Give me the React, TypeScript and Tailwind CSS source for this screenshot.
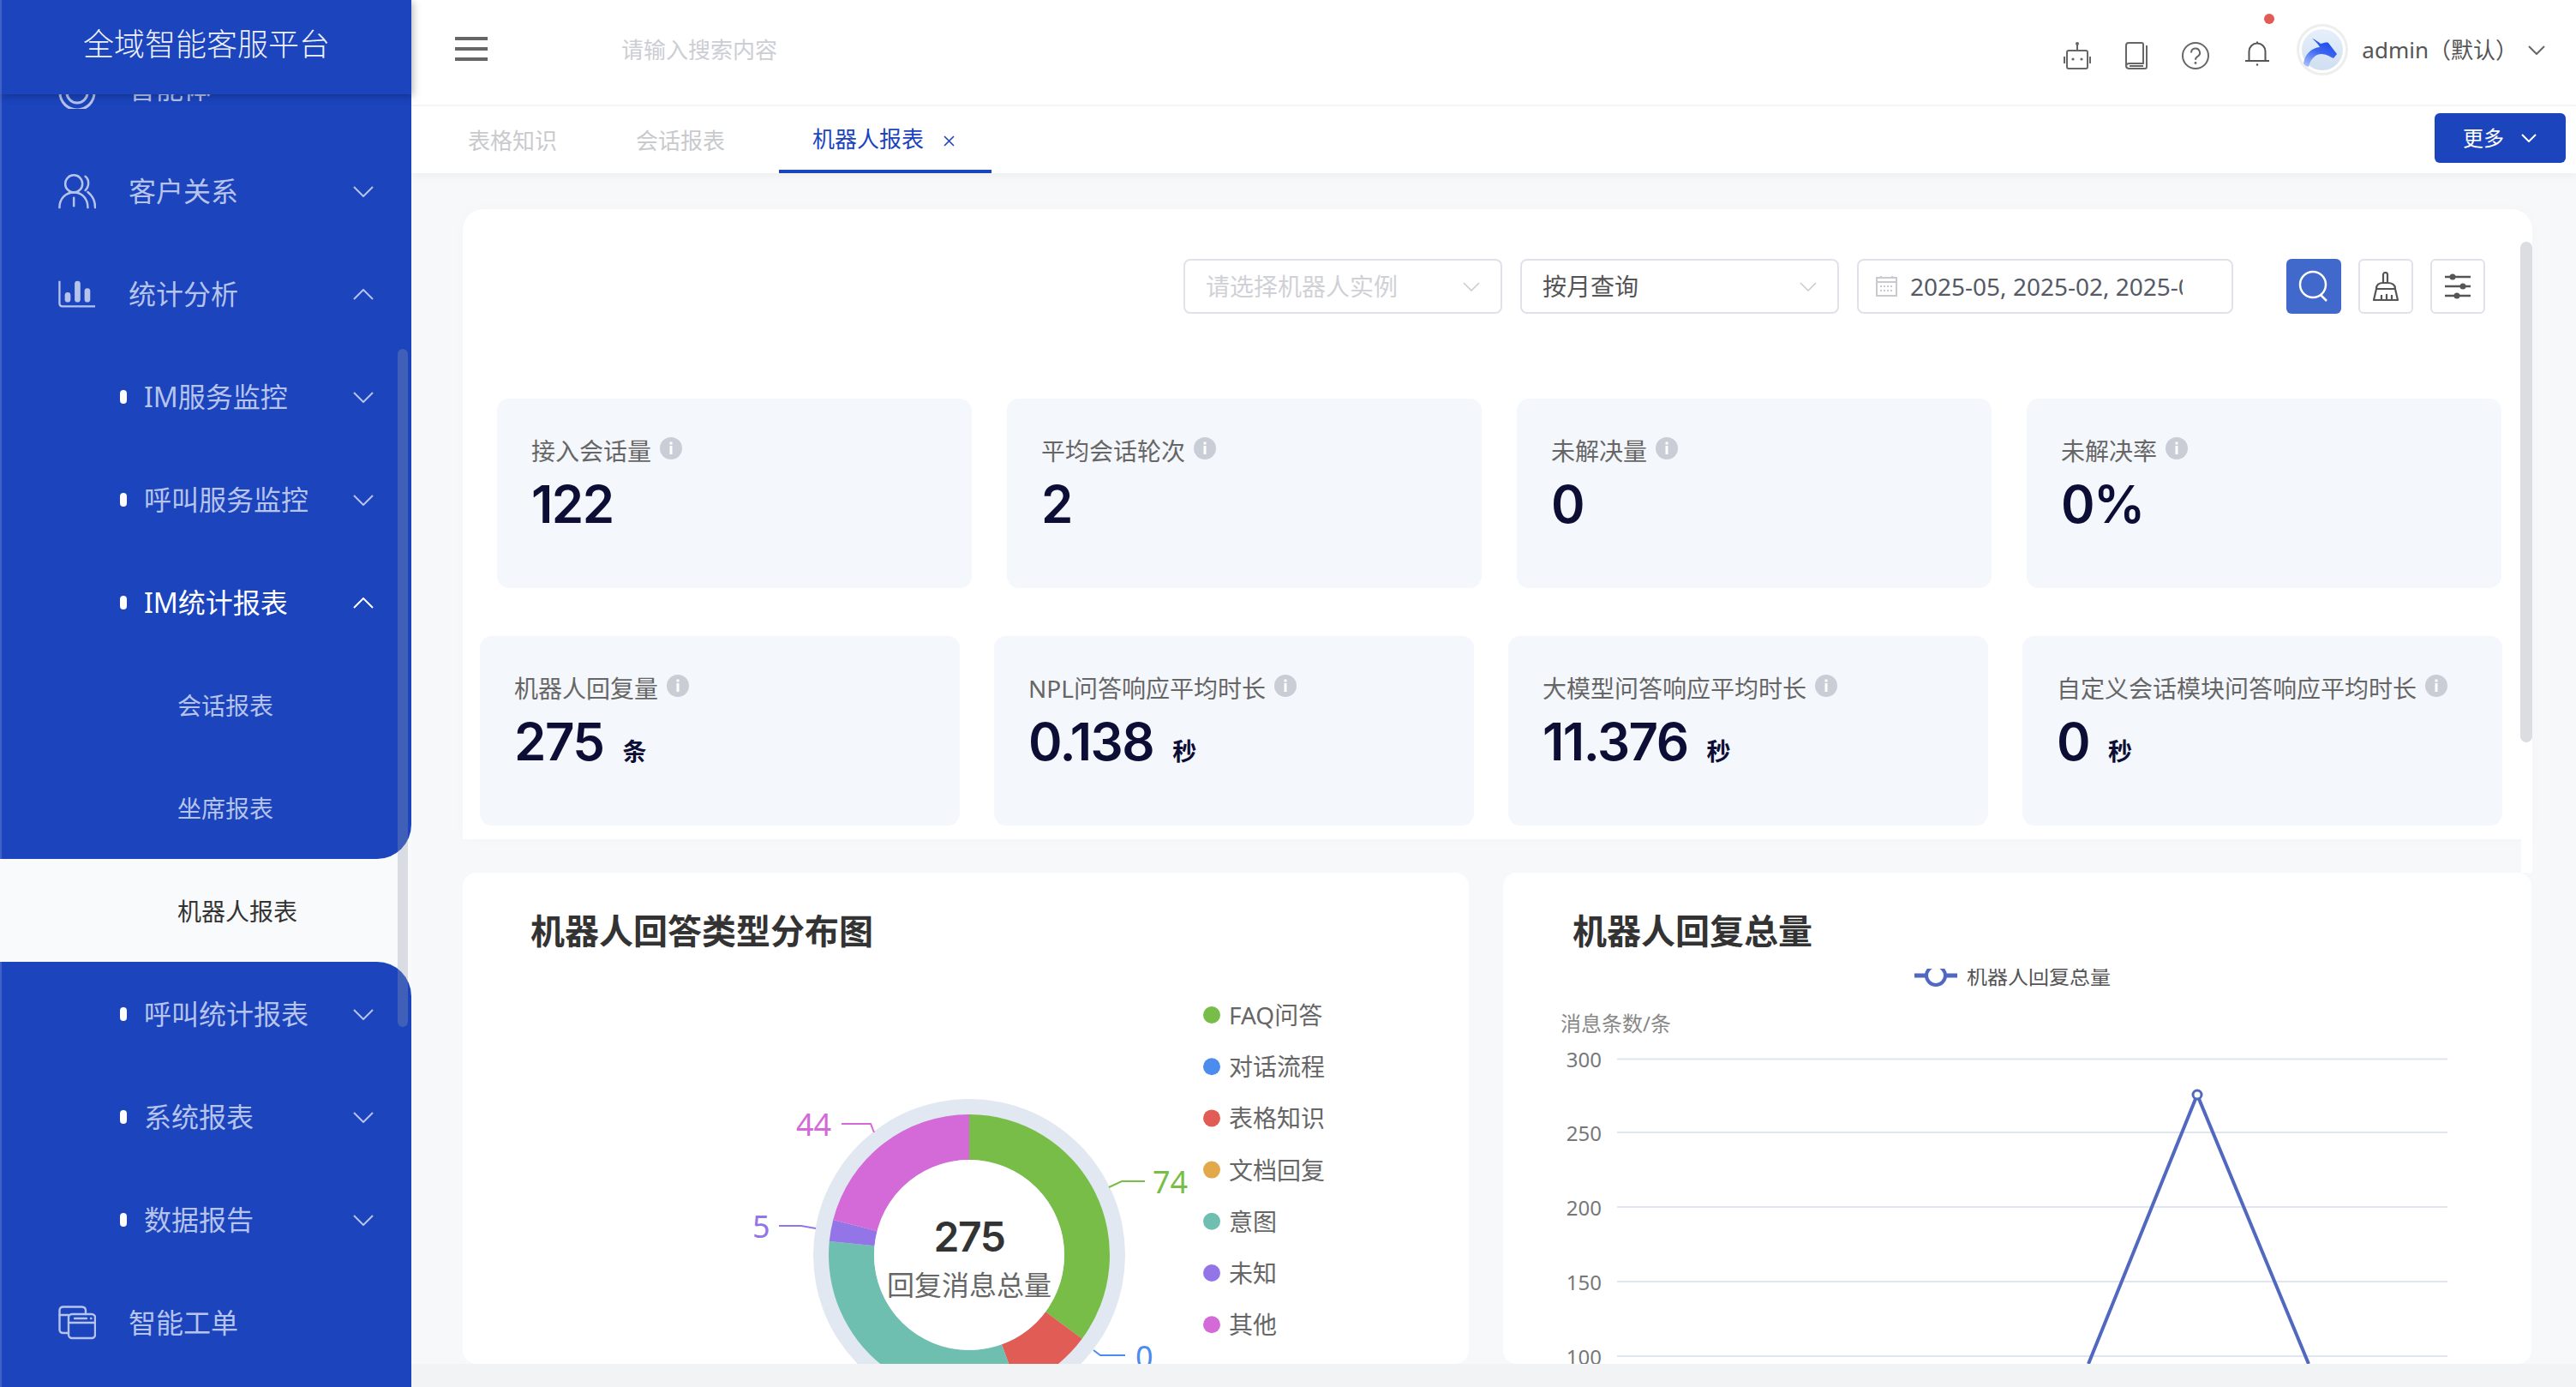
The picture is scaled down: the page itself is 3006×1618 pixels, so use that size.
import React from "react";

const SIDE = "#b6c3eb";

function Chevron({ up = false, color = SIDE, w = 24, h = 13, sw = 2 }: { up?: boolean; color?: string; w?: number; h?: number; sw?: number }) {
  return (
    <svg width={w} height={h} viewBox={`0 0 ${w} ${h}`} fill="none" stroke={color} strokeWidth={sw}>
      <polyline points={up ? `1,${h - 1} ${w / 2},1 ${w - 1},${h - 1}` : `1,1 ${w / 2},${h - 1} ${w - 1},1`} />
    </svg>
  );
}

function AgentIcon() {
  return (
    <svg width="44" height="48" viewBox="0 0 44 48" fill="none" stroke={SIDE} strokeWidth="3">
      <circle cx="22" cy="29" r="20" />
      <circle cx="22" cy="29" r="12" />
    </svg>
  );
}
function PeopleIcon() {
  return (
    <svg width="46" height="42" viewBox="0 0 46 42" fill="none" stroke={SIDE} strokeWidth="2.6" strokeLinecap="round">
      <circle cx="19" cy="12" r="10.5" />
      <path d="M1.5 41C1.5 30 9 22.5 19 22.5S36 30 36 41" />
      <path d="M19 29V39" />
      <path d="M33 3C38 7 38 15 33 20" />
      <path d="M36 22C41 26 45 33 45 41" />
    </svg>
  );
}
function BarsIcon() {
  return (
    <svg width="46" height="34" viewBox="0 0 46 34" fill="none">
      <path d="M1.5 1V28Q1.5 32 5 32H45" stroke={SIDE} strokeWidth="2.4" />
      <rect x="8" y="15" width="7" height="12" rx="3.5" fill={SIDE} />
      <rect x="20" y="1" width="7" height="26" rx="3.5" fill={SIDE} />
      <rect x="32" y="10" width="7" height="17" rx="3.5" fill={SIDE} />
    </svg>
  );
}
function TicketIcon() {
  return (
    <svg width="44" height="40" viewBox="0 0 44 40" fill="none" stroke={SIDE} strokeWidth="2.4" strokeLinecap="round">
      <path d="M12 32H6Q1.5 32 1.5 28V6Q1.5 1.5 6 1.5H27Q32 1.5 32 6V10" />
      <path d="M1.5 11H12" />
      <rect x="12" y="10" width="31" height="28" rx="4" />
      <path d="M12 20H43" />
      <path d="M19 15H33" />
      <path d="M38 15H38.5" />
    </svg>
  );
}

type Item = { label: string; level: number; icon?: React.ReactNode; chev?: "up" | "down"; active?: boolean };

function Row({ item }: { item: Item }) {
  return (
    <div className="flex h-[120px] items-center pt-[2px]">
      {item.level === 1 && (
        <div className="ml-[66px] mr-[38px] flex w-[44px] items-center justify-center">{item.icon}</div>
      )}
      {item.level === 2 && <div className="ml-[138px] mr-[20px] h-[16px] w-[8px] rounded-full bg-white" />}
      <span
        className={
          item.level === 3
            ? "ml-[205px] text-[28px] text-[#b6c3eb]"
            : item.active
              ? "text-[32px] text-white"
              : "text-[32px] text-[#b6c3eb]"
        }
      >
        {item.label}
      </span>
      {item.chev && (
        <div className="ml-auto mr-[44px] flex">
          <Chevron up={item.chev === "up"} color={item.active ? "#ffffff" : SIDE} />
        </div>
      )}
    </div>
  );
}

const TOP_ITEMS: Item[] = [
  { label: "智能体", level: 1, icon: <AgentIcon /> },
  { label: "客户关系", level: 1, icon: <PeopleIcon />, chev: "down" },
  { label: "统计分析", level: 1, icon: <BarsIcon />, chev: "up" },
  { label: "IM服务监控", level: 2, chev: "down" },
  { label: "呼叫服务监控", level: 2, chev: "down" },
  { label: "IM统计报表", level: 2, chev: "up", active: true },
  { label: "会话报表", level: 3 },
  { label: "坐席报表", level: 3 },
];
const BOTTOM_ITEMS: Item[] = [
  { label: "呼叫统计报表", level: 2, chev: "down" },
  { label: "系统报表", level: 2, chev: "down" },
  { label: "数据报告", level: 2, chev: "down" },
  { label: "智能工单", level: 1, icon: <TicketIcon /> },
];

function Sidebar() {
  return (
    <aside className="relative z-20 flex h-full w-[480px] shrink-0 flex-col bg-[#f9fafc]">
      <div className="relative z-20 flex h-[110px] shrink-0 items-center justify-center border-l-2 border-[#3f62c6] bg-[#1b44bd] pb-[6px] text-[36px] font-light text-[#eef1fb] shadow-[2px_2px_9px_rgba(0,0,0,0.28)]">
        全域智能客服平台
      </div>
      <div className="mt-[-68px] flex min-h-0 flex-1 flex-col overflow-hidden">
        <div className="rounded-br-[40px] border-l-2 border-[#3f62c6] bg-[#1b44bd]">
          {TOP_ITEMS.map((it) => (
            <Row key={it.label} item={it} />
          ))}
        </div>
        <div className="flex h-[120px] shrink-0 items-center pl-[207px] pt-[2px] text-[28px] text-[#333333]">机器人报表</div>
        <div className="flex-1 rounded-tr-[40px] border-l-2 border-[#3f62c6] bg-[#1b44bd]">
          {BOTTOM_ITEMS.map((it) => (
            <Row key={it.label} item={it} />
          ))}
        </div>
      </div>
      <div className="absolute right-[4px] top-[407px] z-10 h-[791px] w-[12px] rounded-full bg-[rgba(148,155,175,0.31)]" />
    </aside>
  );
}

function TopBar() {
  return (
    <div className="flex h-[122px] shrink-0 items-center bg-white">
      <div className="ml-[51px] mb-[8px] flex w-[38px] flex-col gap-[8px]">
        <span className="h-[4px] bg-[#666666]" />
        <span className="h-[4px] bg-[#666666]" />
        <span className="h-[4px] bg-[#666666]" />
      </div>
      <span className="ml-[156px] mb-[6px] text-[26px] text-[#ccced4]">请输入搜索内容</span>
      <div className="ml-auto mr-[36px] flex items-center">
        <svg className="mt-[8px]" width="32" height="32" viewBox="0 0 32 32" fill="none" stroke="#666" strokeWidth="2">
          <path d="M16 2V10" />
          <circle cx="16" cy="2" r="1" fill="#666" />
          <rect x="4" y="10" width="24" height="21" rx="2" />
          <circle cx="11" cy="20" r="1.6" fill="#666" stroke="none" />
          <circle cx="21" cy="20" r="1.6" fill="#666" stroke="none" />
          <path d="M1 17V25M31 17V25" />
        </svg>
        <svg className="ml-[40px] mt-[8px]" width="26" height="32" viewBox="0 0 26 32" fill="none" stroke="#666" strokeWidth="2">
          <path d="M1 27V4a3 3 0 0 1 3-3h15a2 2 0 0 1 2 2v22H5a4 4 0 0 0-4 2.500a3.500 3.500 0 0 0 3 3.500h19a2 2 0 0 0 2-2V4" />
          <path d="M5 28H21" />
        </svg>
        <svg className="ml-[40px] mt-[8px]" width="32" height="32" viewBox="0 0 32 32" fill="none" stroke="#666" strokeWidth="2">
          <circle cx="16" cy="16" r="15" />
          <path d="M11 12.500a5 5 0 1 1 7.500 4.300c-1.800 1-2.500 2-2.500 4" />
          <circle cx="16" cy="24.500" r="1.400" fill="#666" stroke="none" />
        </svg>
        <div className="relative ml-[42px] mb-[-4px]">
          <svg width="28" height="30" viewBox="0 0 28 30" fill="none" stroke="#555" strokeWidth="2">
            <path d="M0 23H28" />
            <path d="M4.500 23V12a9.500 9.500 0 0 1 19 0V23" />
            <path d="M14 0.500V2.500" />
            <circle cx="14" cy="27.500" r="1.200" fill="#555" stroke="none" />
          </svg>
          <span className="absolute left-[22px] top-[-32px] h-[12px] w-[12px] rounded-full bg-[#e05c55]" />
        </div>
        <div className="ml-[32px] mb-[6px] flex h-[60px] w-[60px] items-center justify-center rounded-full border-[3px] border-[#eeeeee]">
          <div className="h-[48px] w-[48px] rounded-full bg-gradient-to-b from-[#e6f0fb] to-[#cfdff1]">
            <svg width="48" height="48" viewBox="0 0 48 48">
              <defs>
                <linearGradient id="dragon" x1="0.1" y1="1" x2="0.6" y2="0.1">
                  <stop offset="0" stopColor="#a9c1fa" />
                  <stop offset="0.6" stopColor="#3f69f2" />
                  <stop offset="1" stopColor="#2450ec" />
                </linearGradient>
              </defs>
              <path
                d="M2 40C4 28 12 22 21 21C18 16 15 13 12 11C16 12 19 15 22 17C26 16 29 15 31 16L41 29L37 34C33 32 28 29 23 29C16 29 10 35 8 44C5 43 3 42 2 40Z"
                fill="url(#dragon)"
              />
            </svg>
          </div>
        </div>
        <span className="ml-[16px] mb-[6px] text-[26px] text-[#555555]">admin（默认）</span>
        <div className="ml-[12px] mb-[6px] flex">
          <Chevron color="#666" w={20} h={11} />
        </div>
      </div>
    </div>
  );
}

function Tabs() {
  return (
    <div className="relative z-10 mt-[2px] flex h-[78px] shrink-0 items-center bg-white pl-[66px] text-[26px] text-[#c9cacd] shadow-[0_4px_10px_rgba(0,0,0,0.04)]">
      <span className="pt-[2px]">表格知识</span>
      <span className="ml-[92px] pt-[2px]">会话报表</span>
      <div className="ml-[63px] flex h-full w-[248px] items-center border-b-4 border-[#1b44bd] pl-[39px] pt-[2px] text-[#1b44bd]">
        <span>机器人报表</span>
        <svg className="ml-[23px] mt-[4px]" width="13" height="13" viewBox="0 0 13 13" stroke="#1b44bd" strokeWidth="1.600">
          <path d="M1 1L12 12M12 1L1 12" />
        </svg>
      </div>
      <div className="ml-auto mr-[12px] mb-[4px] flex h-[58px] w-[153px] items-center rounded-[6px] bg-[#1b44bd] pl-[33px] text-[24px] text-white">
        <span>更多</span>
        <div className="ml-[20px] flex">
          <Chevron color="#ffffff" w={18} h={10} />
        </div>
      </div>
    </div>
  );
}

function Select({ text, placeholder = false }: { text: string; placeholder?: boolean }) {
  return (
    <div className="flex h-[64px] w-[372px] items-center rounded-[8px] border-2 border-[#e1e2e9] pl-[24px] pr-[24px] text-[28px]">
      <span className={placeholder ? "text-[#d0d1d6]" : "text-[#555555]"}>{text}</span>
      <div className="ml-auto flex">
        <Chevron color="#c9cad0" w={20} h={11} sw={1.500} />
      </div>
    </div>
  );
}

function Filters() {
  return (
    <div className="flex justify-end pr-[55px]">
      <div className="flex gap-[21px]">
        <Select text="请选择机器人实例" placeholder />
        <Select text="按月查询" />
        <div className="flex h-[64px] w-[439px] items-center rounded-[8px] border-2 border-[#e1e2e9] pl-[20px] text-[28px] text-[#555a66]">
          <svg width="25" height="24" viewBox="0 0 25 24" fill="none" stroke="#c9cad0" strokeWidth="2">
            <rect x="1" y="2" width="23" height="21" />
            <path d="M1 7H24M6 0V3M19 0V3" />
            <path d="M5 12H20M5 17H20" strokeDasharray="2 2" />
          </svg>
          <span className="ml-[15px] w-[318px] overflow-hidden whitespace-nowrap">2025-05, 2025-02, 2025-03</span>
        </div>
      </div>
      <div className="ml-[62px] flex gap-[20px]">
        <div className="flex h-[64px] w-[64px] items-center justify-center rounded-[6px] bg-[#4069cb]">
          <svg width="36" height="38" viewBox="0 0 36 38" fill="none" stroke="#fff" strokeWidth="2.500">
            <circle cx="17" cy="17" r="15" />
            <path d="M26 29L33 36" />
          </svg>
        </div>
        <div className="flex h-[64px] w-[64px] items-center justify-center rounded-[6px] border-2 border-[#e1e2e9]">
          <svg width="30" height="34" viewBox="0 0 30 34" fill="none" stroke="#555" strokeWidth="2.200" strokeLinejoin="round">
            <path d="M12 13V3.500A2.500 2.500 0 0 1 17 3.500V13" />
            <path d="M4 20C4 15 7 13 12 13H17C23 13 26 15 26 20Z" />
            <path d="M4 20L1 33H29L26 20" />
            <path d="M10 33V27M16 33V26M22 33V27" />
          </svg>
        </div>
        <div className="flex h-[64px] w-[64px] items-center justify-center rounded-[6px] border-2 border-[#e1e2e9]">
          <svg width="30" height="30" viewBox="0 0 30 30" stroke="#555" strokeWidth="2.500">
            <path d="M0 4H30M0 15H30M0 26H30" />
            <circle cx="9" cy="4" r="3.500" fill="#555" stroke="none" />
            <circle cx="21" cy="15" r="3.500" fill="#555" stroke="none" />
            <circle cx="14" cy="26" r="3.500" fill="#555" stroke="none" />
          </svg>
        </div>
      </div>
    </div>
  );
}

function InfoDot() {
  return (
    <svg className="mt-[-6px] shrink-0" width="26" height="26" viewBox="0 0 26 26">
      <circle cx="13" cy="13" r="13" fill="#c9cdd5" />
      <rect x="11.500" y="10" width="3" height="10" fill="#fff" />
      <rect x="11.500" y="5.500" width="3" height="3" fill="#fff" />
    </svg>
  );
}

function Stat({ label, value, unit }: { label: string; value: string; unit?: string }) {
  return (
    <div className="h-[221px] rounded-[14px] bg-[#f4f7fb] pl-[40px] pt-[43px]">
      <div className="flex h-[36px] items-center gap-[10px] whitespace-nowrap text-[28px] text-[#666666]">
        <span>{label}</span>
        <InfoDot />
      </div>
      <div className="mt-[12px] flex h-[64px] items-baseline gap-[22px] text-[#0c0e35]">
        <span className="font-['Inter','Noto_Sans_CJK_SC',sans-serif] text-[60px] font-semibold leading-[64px] tracking-[-1.5px]">{value}</span>
        {unit && <span className="text-[28px] font-bold leading-[26px]">{unit}</span>}
      </div>
    </div>
  );
}

const P = (r: number, deg: number, cx = 1131, cy = 1464) => {
  const a = (deg * Math.PI) / 180;
  return `${(cx + r * Math.sin(a)).toFixed(2)} ${(cy - r * Math.cos(a)).toFixed(2)}`;
};
const seg = (a: number, b: number, R = 164, r = 111) =>
  `M${P(R, a)}A${R} ${R} 0 ${b - a > 180 ? 1 : 0} 1 ${P(R, b)}L${P(r, b)}A${r} ${r} 0 ${b - a > 180 ? 1 : 0} 0 ${P(r, a)}Z`;

const LEGEND: [string, string][] = [
  ["FAQ问答", "#78bd48"],
  ["对话流程", "#4d8cef"],
  ["表格知识", "#e05c55"],
  ["文档回复", "#e3a84a"],
  ["意图", "#6fbfb0"],
  ["未知", "#9375e8"],
  ["其他", "#d36ad8"],
];

function DonutCard() {
  return (
    <div className="h-[573px] overflow-hidden rounded-[16px] bg-white">
      <div className="flex h-[112px] items-center pl-[79px] pt-[24px] text-[40px] font-semibold text-[#333333]">机器人回答类型分布图</div>
      <svg width="1174" height="461" viewBox="540 1130 1174 461" className="block">
        <circle cx="1131" cy="1464" r="182" fill="#e1e8f1" />
        <path d={seg(0, 126.6)} fill="#78bd48" />
        <path d={seg(126.6, 160)} fill="#e05c55" />
        <path d={seg(160, 275.6)} fill="#6fbfb0" />
        <path d={seg(275.6, 284.5)} fill="#9375e8" />
        <path d={seg(284.5, 360)} fill="#d36ad8" />
        <circle cx="1131" cy="1464" r="111" fill="#fff" />
        <text x="1131" y="1442" textAnchor="middle" dominantBaseline="central" fontSize="48" fontWeight="600" letterSpacing="-1.500" fill="#333" fontFamily="Inter, sans-serif">275</text>
        <text x="1131" y="1498" textAnchor="middle" dominantBaseline="central" fontSize="32" fill="#666">回复消息总量</text>
        <g fill="none" strokeWidth="2">
          <path d="M1294 1385L1309 1378H1336" stroke="#78bd48" />
          <path d="M982 1311H1016L1020 1321" stroke="#d36ad8" />
          <path d="M909 1430H935L952 1433" stroke="#9375e8" />
          <path d="M1276 1575L1284 1581H1313" stroke="#4d8cef" />
        </g>
        <g fontSize="36" dominantBaseline="central">
          <text x="1345" y="1378" fill="#78bd48">74</text>
          <text x="929" y="1311" fill="#d36ad8">44</text>
          <text x="878" y="1430" fill="#9375e8">5</text>
          <text x="1325" y="1582" fill="#4d8cef">0</text>
        </g>
        {LEGEND.map(([t, c], i) => (
          <g key={t}>
            <circle cx="1414" cy={1184 + i * 60.200} r="10" fill={c} />
            <text x="1434" y={1184 + i * 60.200} dominantBaseline="central" fontSize="28" fill="#666">{t}</text>
          </g>
        ))}
      </svg>
    </div>
  );
}

function LineCard() {
  const ticks: [string, number][] = [["300", 1235.5], ["250", 1321], ["200", 1408], ["150", 1495], ["100", 1582]];
  return (
    <div className="h-[573px] overflow-hidden rounded-[16px] bg-white">
      <div className="flex h-[112px] items-center pl-[81px] pt-[24px] text-[40px] font-semibold text-[#333333]">机器人回复总量</div>
      <svg width="1200" height="461" viewBox="1754 1130 1200 461" className="block">
        <path d="M2234 1138H2284" stroke="#5068c0" strokeWidth="5" />
        <circle cx="2259" cy="1138" r="11" fill="#fff" stroke="#5068c0" strokeWidth="4" />
        <text x="2295" y="1138" dominantBaseline="central" fontSize="24" fill="#555">机器人回复总量</text>
        <text x="1821" y="1193" dominantBaseline="central" fontSize="24" fill="#888">消息条数/条</text>
        {ticks.map(([t, y]) => (
          <g key={t}>
            <path d={`M1887 ${y}H2856`} stroke="#e0e6f1" strokeWidth="2" />
            <text x="1869" y={y} textAnchor="end" dominantBaseline="central" fontSize="24" fill="#777">{t}</text>
          </g>
        ))}
        <path d="M2437 1591L2564 1277L2694 1591" fill="none" stroke="#5068c0" strokeWidth="4" />
        <circle cx="2564" cy="1277" r="5" fill="#fff" stroke="#5068c0" strokeWidth="3" />
      </svg>
    </div>
  );
}

function Content() {
  return (
    <div className="min-h-0 flex-1 overflow-hidden bg-[#f7f8fa] pl-[60px] pr-[51px] pt-[42px]">
      <div className="relative h-[735px] rounded-t-[24px] bg-white pt-[58px] shadow-[0_0_16px_rgba(0,0,0,0.02)]">
        <Filters />
        <div className="mt-[99px] grid grid-cols-4 gap-[41px] pl-[40px] pr-[36px]">
          <Stat label="接入会话量" value="122" />
          <Stat label="平均会话轮次" value="2" />
          <Stat label="未解决量" value="0" />
          <Stat label="未解决率" value="0%" />
        </div>
        <div className="mt-[56px] grid grid-cols-4 gap-[40px] pl-[20px] pr-[35px]">
          <Stat label="机器人回复量" value="275" unit="条" />
          <Stat label="NPL问答响应平均时长" value="0.138" unit="秒" />
          <Stat label="大模型问答响应平均时长" value="11.376" unit="秒" />
          <Stat label="自定义会话模块问答响应平均时长" value="0" unit="秒" />
        </div>
        <div className="absolute right-0 top-[38px] h-[584px] w-[14px] rounded-full bg-[#dcdde0]" />
        <div className="absolute right-0 top-[735px] h-[39px] w-[13px] bg-white" />
      </div>
      <div className="mt-[39px] grid grid-cols-[1174px_1200px] gap-[40px]">
        <DonutCard />
        <LineCard />
      </div>
    </div>
  );
}

export default function App() {
  return (
    <div className="flex h-screen w-screen overflow-hidden bg-[#f5f6f8] font-['Noto_Sans','Noto_Sans_CJK_SC',sans-serif]">
      <Sidebar />
      <main className="flex min-w-0 flex-1 flex-col">
        <TopBar />
        <Tabs />
        <Content />
        <div className="h-[27px] shrink-0 bg-[#f2f3f5]" />
      </main>
    </div>
  );
}
